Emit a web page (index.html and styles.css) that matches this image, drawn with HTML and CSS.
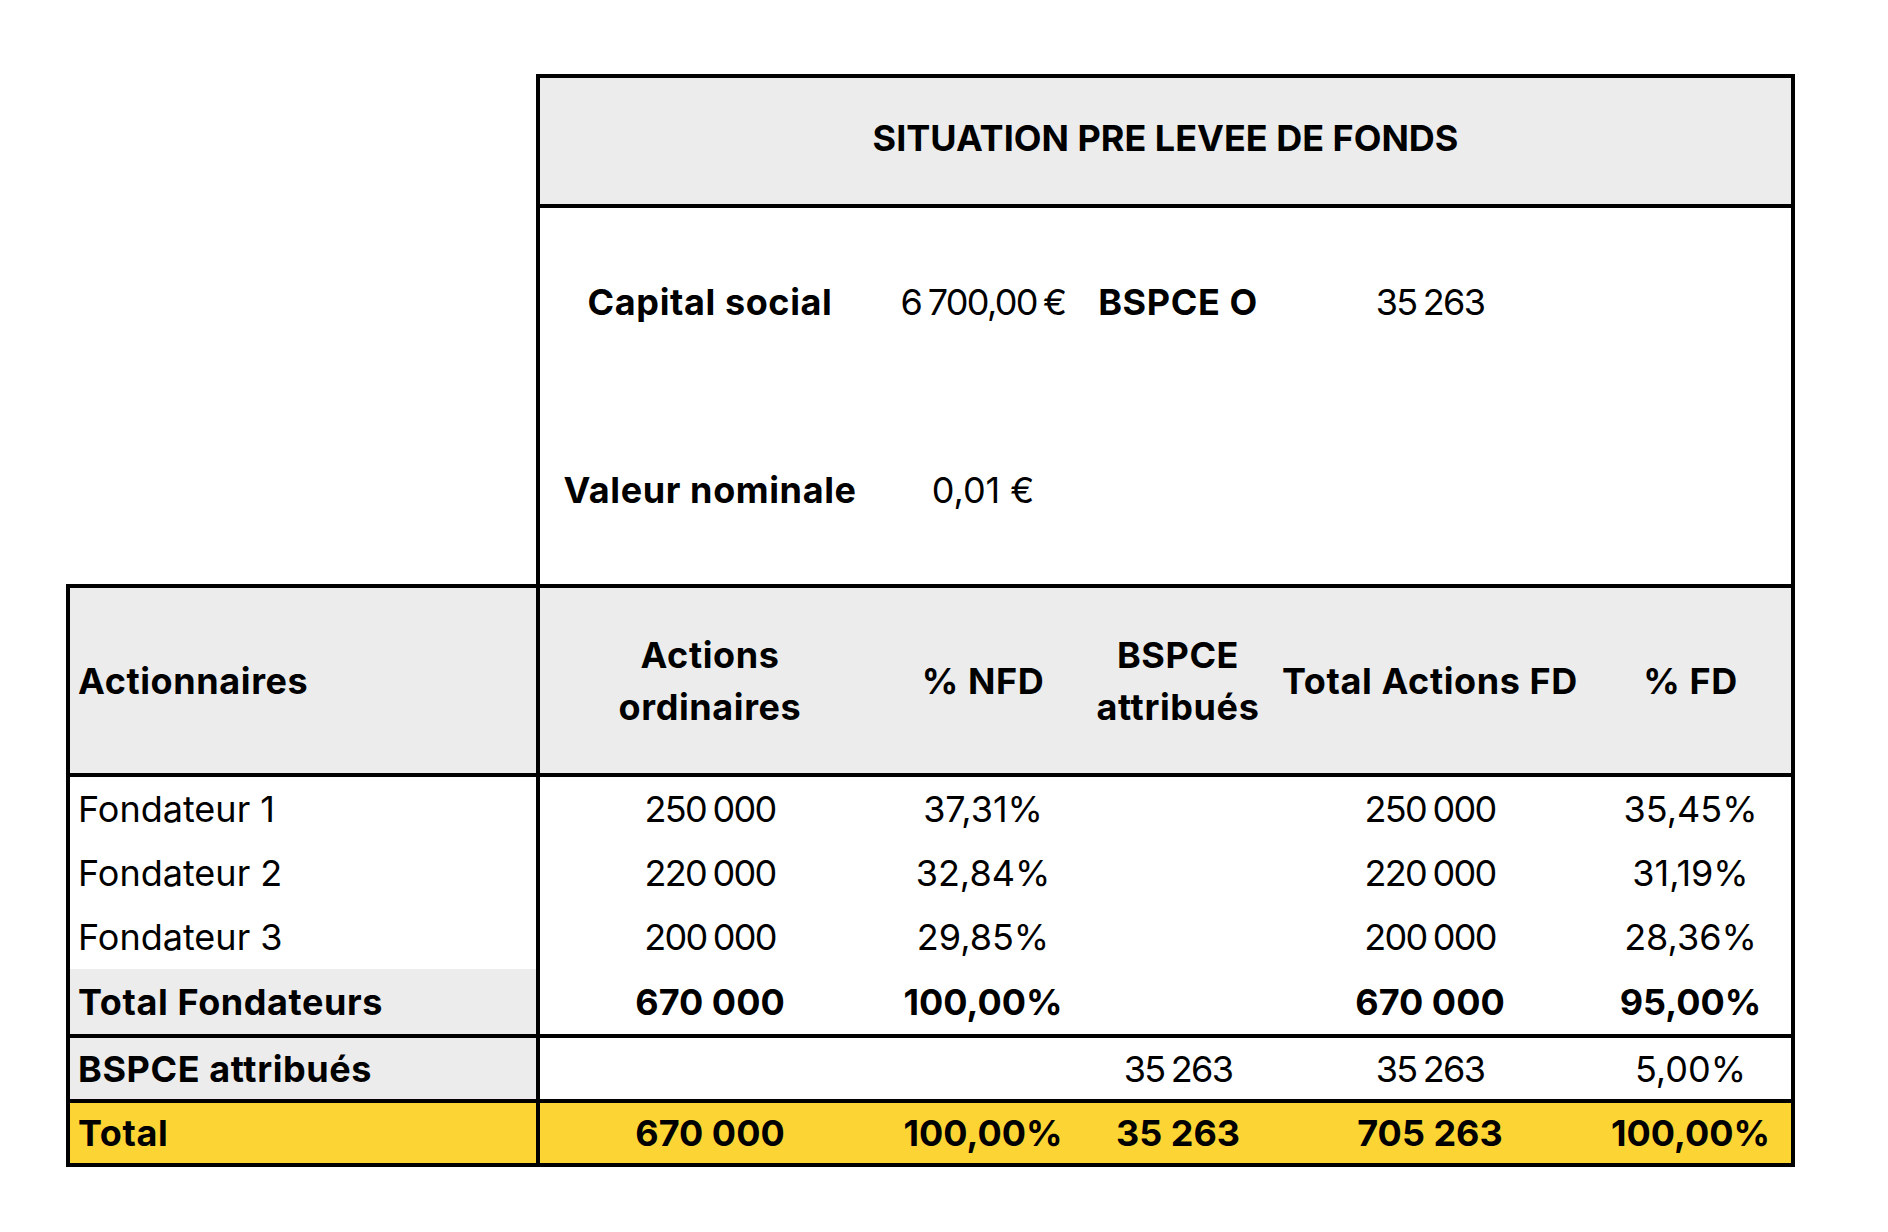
FILE: index.html
```html
<!DOCTYPE html>
<html lang="fr">
<head>
<meta charset="utf-8">
<title>Situation pré levée de fonds</title>
<link rel="stylesheet" href="styles.css">
</head>
<body>
<div class="sheet">
  <section class="top">
    <div class="title">SITUATION PRE LEVEE DE FONDS</div>
    <div class="info">
      <div class="cell b lab">Capital social</div>
      <div class="cell n">6 700,00 €</div>
      <div class="cell b lab">BSPCE O</div>
      <div class="cell n">35 263</div>
      <div class="cell"></div>
      <div class="cell b lab">Valeur nominale</div>
      <div class="cell">0,01 €</div>
      <div class="cell"></div>
      <div class="cell"></div>
      <div class="cell"></div>
    </div>
  </section>
  <section class="table">
    <div class="head first b lab">Actionnaires</div>
    <div class="head b lab">Actions<br>ordinaires</div>
    <div class="head b lab">% NFD</div>
    <div class="head b lab">BSPCE<br>attribués</div>
    <div class="head b lab">Total Actions FD</div>
    <div class="head b lab">% FD</div>

    <div class="row first">Fondateur 1</div>
    <div class="row n">250 000</div>
    <div class="row">37,31%</div>
    <div class="row"></div>
    <div class="row n">250 000</div>
    <div class="row">35,45%</div>

    <div class="row first">Fondateur 2</div>
    <div class="row n">220 000</div>
    <div class="row">32,84%</div>
    <div class="row"></div>
    <div class="row n">220 000</div>
    <div class="row">31,19%</div>

    <div class="row first">Fondateur 3</div>
    <div class="row n">200 000</div>
    <div class="row">29,85%</div>
    <div class="row"></div>
    <div class="row n">200 000</div>
    <div class="row">28,36%</div>

    <div class="row sub first grey b lab">Total Fondateurs</div>
    <div class="row sub b">670 000</div>
    <div class="row sub b">100,00%</div>
    <div class="row sub"></div>
    <div class="row sub b">670 000</div>
    <div class="row sub b">95,00%</div>

    <div class="row bspce first grey b lab">BSPCE attribués</div>
    <div class="row bspce"></div>
    <div class="row bspce"></div>
    <div class="row bspce n">35 263</div>
    <div class="row bspce n">35 263</div>
    <div class="row bspce">5,00%</div>

    <div class="row total first b lab">Total</div>
    <div class="row total b">670 000</div>
    <div class="row total b">100,00%</div>
    <div class="row total b">35 263</div>
    <div class="row total b">705 263</div>
    <div class="row total b">100,00%</div>
  </section>
</div>
</body>
</html>
```
FILE: styles.css
```css
html, body {
  margin: 0;
  padding: 0;
  background: #ffffff;
}

body {
  font-family: "Inter", "Liberation Sans", sans-serif;
  font-size: 36px;
  color: #000000;
}

.sheet {
  padding: 74px 0 0 66px;
}

.b {
  font-weight: 700;
}

/* bold text labels are slightly wider in the original typeface */
.lab {
  letter-spacing: 0.6px;
}

/* regular numbers with thousands separators are tighter */
.n {
  letter-spacing: -1.7px;
  word-spacing: -2px;
}

/* ---------- top block ---------- */
.top {
  margin-left: 470px;
  width: 1259px;
  box-sizing: border-box;
  border: 4px solid #000;
  border-bottom: none;
}

.title {
  height: 130px;
  box-sizing: border-box;
  background: #ececec;
  border-bottom: 4px solid #000;
  display: flex;
  align-items: center;
  justify-content: center;
  font-weight: 700;
  font-size: 36px;
  letter-spacing: 0;
  padding-bottom: 6px;
}

.info {
  display: grid;
  grid-template-columns: 340px 206px 184px 320px 201px;
  grid-template-rows: 188px 188px;
}

.info .cell {
  display: flex;
  align-items: center;
  justify-content: center;
  white-space: nowrap;
}

/* ---------- bottom table ---------- */
.table {
  width: 1729px;
  box-sizing: border-box;
  border: 4px solid #000;
  display: grid;
  grid-template-columns: 470px 340px 206px 184px 320px 201px;
}

.table > div {
  box-sizing: border-box;
  display: flex;
  align-items: center;
  justify-content: center;
  text-align: center;
  white-space: nowrap;
}

.table > .first {
  justify-content: flex-start;
  text-align: left;
  padding-left: 8px;
  border-right: 4px solid #000;
}

.head {
  height: 189px;
  background: #ececec;
  border-bottom: 4px solid #000;
  line-height: 52px;
}

.row {
  height: 64px;
}

.row.sub {
  height: 69px;
  border-bottom: 4px solid #000;
}

.row.bspce {
  height: 65px;
  border-bottom: 4px solid #000;
}

.row.total {
  height: 60px;
  background: #fcd535;
}

.grey {
  background: #ececec;
}
```
